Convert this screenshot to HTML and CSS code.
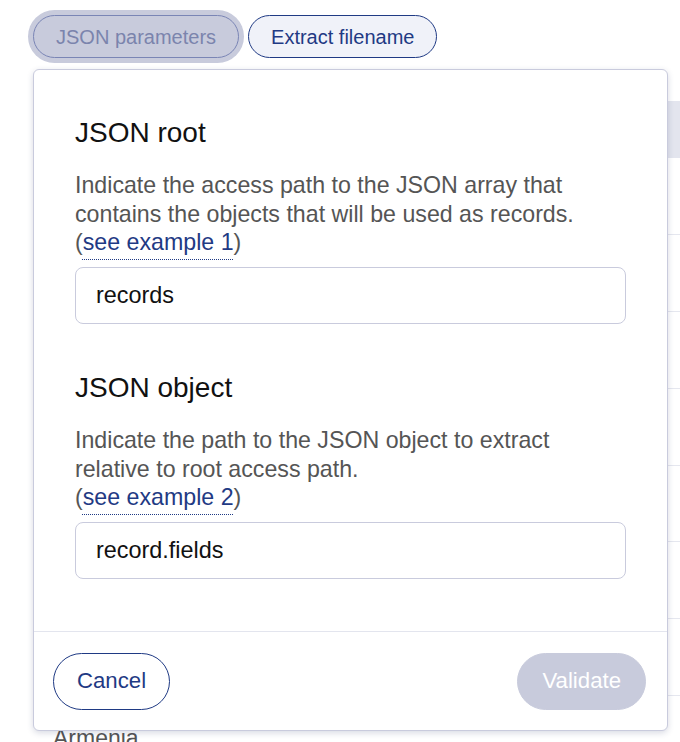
FILE: index.html
```html
<!DOCTYPE html>
<html lang="en">
<head>
<meta charset="utf-8">
<title>JSON parameters</title>
<link rel="stylesheet" href="styles.css">
</head>
<body>
<div class="page">
  <div class="tabs">
    <button class="tab tab-active" type="button">JSON parameters</button>
    <button class="tab" type="button">Extract filename</button>
  </div>

  <div class="table">
    <div class="table-head"></div>
    <div class="row">Afghanistan</div>
    <div class="row">Albania</div>
    <div class="row">Algeria</div>
    <div class="row">American Samoa</div>
    <div class="row">Andorra</div>
    <div class="row">Angola</div>
    <div class="row">Argentina</div>
    <div class="row">Armenia</div>
  </div>

  <div class="popover">
    <div class="popover-body">
      <section class="field">
        <h2 class="field-title">JSON root</h2>
        <p class="field-help">Indicate the access path to the JSON array that contains the objects that will be used as records.
          <span class="help-example">(<a class="help-link" href="#">see example 1</a>)</span></p>
        <input class="field-input" type="text" value="records">
      </section>
      <section class="field">
        <h2 class="field-title">JSON object</h2>
        <p class="field-help">Indicate the path to the JSON object to extract relative to root access path.
          <span class="help-example">(<a class="help-link" href="#">see example 2</a>)</span></p>
        <input class="field-input" type="text" value="record.fields">
      </section>
    </div>
    <div class="popover-footer">
      <button class="btn btn-outline" type="button">Cancel</button>
      <button class="btn btn-disabled" type="button">Validate</button>
    </div>
  </div>
</div>
</body>
</html>
```

FILE: styles.css
```css
* { box-sizing: border-box; }

html, body {
  margin: 0;
  padding: 0;
  background: #ffffff;
  font-family: "Liberation Sans", Arial, sans-serif;
  overflow: hidden;
}

.page {
  position: relative;
  width: 680px;
  height: 742px;
  padding: 15px 0 0 33px;
  overflow: hidden;
}

.tabs {
  display: flex;
  gap: 9px;
}

.tab {
  height: 43px;
  padding: 0 22px;
  border-radius: 22px;
  border: 1px solid #1f3a84;
  background: #f0f2f9;
  color: #1f3a84;
  font-family: "Liberation Sans", Arial, sans-serif;
  font-size: 20px;
  line-height: 1;
}

.tab-active {
  background: #c8cbdc;
  border-color: #7a85b5;
  color: #7b84ad;
  box-shadow: 0 0 0 5px #c8cbdc;
}

.table {
  margin-top: 43px;
  width: 647px;
}

.table-head {
  height: 57px;
  background: #e3e5ee;
}

.row {
  height: 76.9px;
  padding: 28px 0 0 20px;
  border-bottom: 1px solid #e5e7ef;
  font-size: 23px;
  line-height: 28.5px;
  color: #555555;
}

.popover {
  position: absolute;
  left: 33px;
  top: 69px;
  width: 635px;
  height: 662px;
  background: #ffffff;
  border: 1px solid #c9cbdd;
  border-radius: 6px;
  box-shadow: 0 2px 6px rgba(40, 50, 100, 0.18);
  display: flex;
  flex-direction: column;
}

.popover-body {
  flex: 1;
  padding: 46px 41px 0 41px;
  display: flex;
  flex-direction: column;
  gap: 47px;
}

.field {
  display: flex;
  flex-direction: column;
}

.field-title {
  margin: 0;
  font-size: 28px;
  line-height: 34px;
  font-weight: 400;
  color: #111111;
}

.field-help {
  margin: 21px 0 0 0;
  font-size: 23.2px;
  line-height: 28.5px;
  color: #555555;
}

.help-example {
  display: block;
}

.help-link {
  color: #1f3a84;
  text-decoration: underline dotted #1f3a84;
  text-decoration-thickness: 1px;
  text-underline-offset: 9px;
}

.field-input {
  margin-top: 10.5px;
  height: 57px;
  width: 100%;
  padding: 0 20px;
  border: 1px solid #c9cbdd;
  border-radius: 8px;
  font-family: "Liberation Sans", Arial, sans-serif;
  font-size: 23.4px;
  color: #111111;
  background: #ffffff;
  outline: none;
}

.popover-footer {
  height: 99px;
  border-top: 1px solid #e3e5ee;
  display: flex;
  align-items: center;
  justify-content: space-between;
  padding: 0 21px 0 19px;
}

.btn {
  height: 57px;
  padding: 0 23px;
  border-radius: 29px;
  font-family: "Liberation Sans", Arial, sans-serif;
  font-size: 22.2px;
  line-height: 1;
}

.btn-outline {
  background: #ffffff;
  border: 1px solid #1f3a84;
  color: #1f3a84;
}

.btn-disabled {
  background: #c8cbdc;
  border: 1px solid #c8cbdc;
  color: #ffffff;
  padding: 0 24px;
}
```
